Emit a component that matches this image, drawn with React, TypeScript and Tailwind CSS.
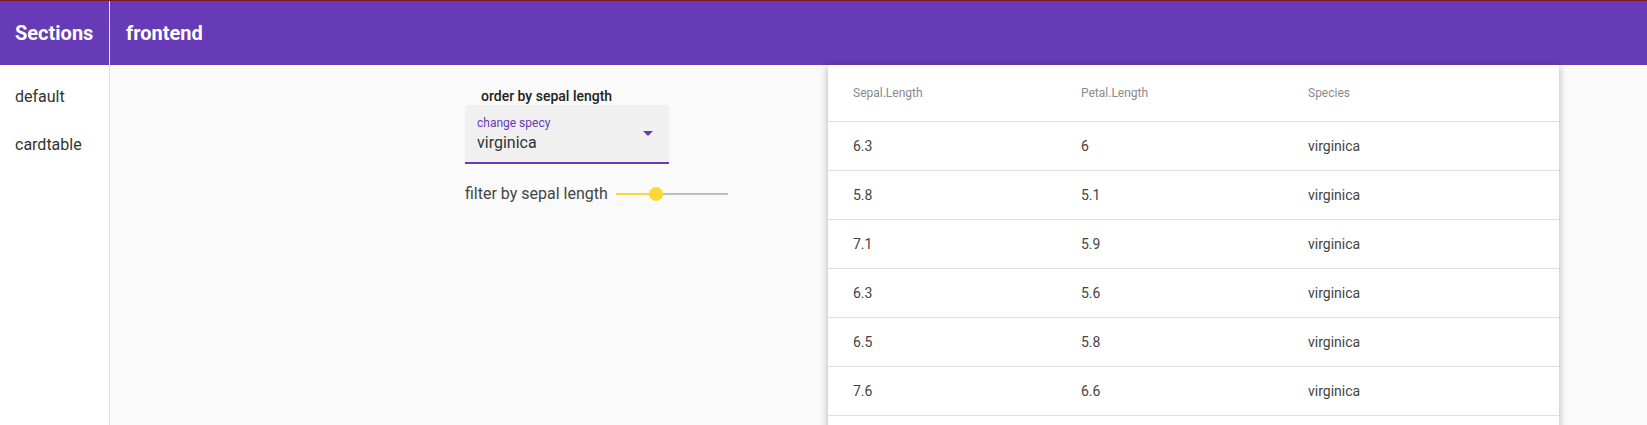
import React from "react"

// iris rows shown in the card table
const rows = [
  { sepal: "6.3", petal: "6", species: "virginica" },
  { sepal: "5.8", petal: "5.1", species: "virginica" },
  { sepal: "7.1", petal: "5.9", species: "virginica" },
  { sepal: "6.3", petal: "5.6", species: "virginica" },
  { sepal: "6.5", petal: "5.8", species: "virginica" },
  { sepal: "7.6", petal: "6.6", species: "virginica" },
]

function Slider() {
  return (
    <div className="relative h-[14px] w-[112px]">
      <div className="absolute left-0 right-0 top-[6px] h-[2px] bg-[#bdbdbd]" />
      <div className="absolute left-0 top-[6px] h-[2px] w-[40px] bg-[#fdd835]" />
      <div className="absolute left-[33px] top-0 h-[14px] w-[14px] rounded-full bg-[#fdd835]" />
    </div>
  )
}

function Controls() {
  return (
    <div className="flex w-[263px] flex-col">
      <div className="mt-[22px] pl-[16px] text-[14px] font-medium leading-[18px] text-[#222]">
        order by sepal length
      </div>
      <div className="flex h-[59px] w-[204px] items-start justify-between rounded-t-[4px] border-b-2 border-[#673ab7] bg-[#f0f0f0] pl-[12px] pr-[16px]">
        <div className="flex flex-col">
          <span className="mt-[11px] text-[12px] leading-[14px] text-[#673ab7]">change specy</span>
          <span className="mt-[3px] text-[16px] leading-[20px] text-[#333]">virginica</span>
        </div>
        <svg width="10" height="5" viewBox="0 0 10 5" className="mt-[26px]">
          <path d="M0 0 L10 0 L5 5 Z" fill="#673ab7" />
        </svg>
      </div>
      <div className="mt-[20px] flex items-center gap-[8px]">
        <span className="text-[16px] leading-[20px] text-[#444]">filter by sepal length</span>
        <Slider />
      </div>
    </div>
  )
}

function CardTable() {
  return (
    <div className="ml-[100px] w-[731px] self-start bg-white shadow-[0_2px_8px_rgba(0,0,0,0.3)]">
      <div className="flex h-[57px] items-center border-b border-[#e0e0e0] text-[12px] text-[#8a8a8a]">
        <div className="w-[253px] pl-[25px]">Sepal.Length</div>
        <div className="w-[227px]">Petal.Length</div>
        <div className="flex-1">Species</div>
      </div>
      {rows.map((r, i) => (
        <div key={i} className="flex h-[49px] items-center border-b border-[#e0e0e0] text-[14px] text-[#444]">
          <div className="w-[253px] pl-[25px]">{r.sepal}</div>
          <div className="w-[227px]">{r.petal}</div>
          <div className="flex-1">{r.species}</div>
        </div>
      ))}
      <div className="h-[30px]" />
    </div>
  )
}

export default function App() {
  return (
    <div className="flex h-screen flex-col overflow-hidden bg-[#fafafa] font-['Roboto',sans-serif]">
      <header className="flex h-[65px] shrink-0 border-t border-[#7b1c1c] bg-[#673ab7] text-white">
        <div className="flex w-[110px] items-center border-r border-[#e8e0f4] pl-[15px] text-[20px] font-bold">
          Sections
        </div>
        <div className="flex items-center pl-[16px] text-[20px] font-bold">frontend</div>
      </header>
      <div className="flex flex-1">
        <nav className="w-[110px] shrink-0 border-r border-[#e0e0e0] bg-white pt-[8px] text-[16px] text-[#333]">
          <div className="flex h-12 items-center pl-[15px]">default</div>
          <div className="flex h-12 items-center pl-[15px]">cardtable</div>
        </nav>
        <main className="flex flex-1 pl-[355px]">
          <Controls />
          <CardTable />
        </main>
      </div>
    </div>
  )
}
